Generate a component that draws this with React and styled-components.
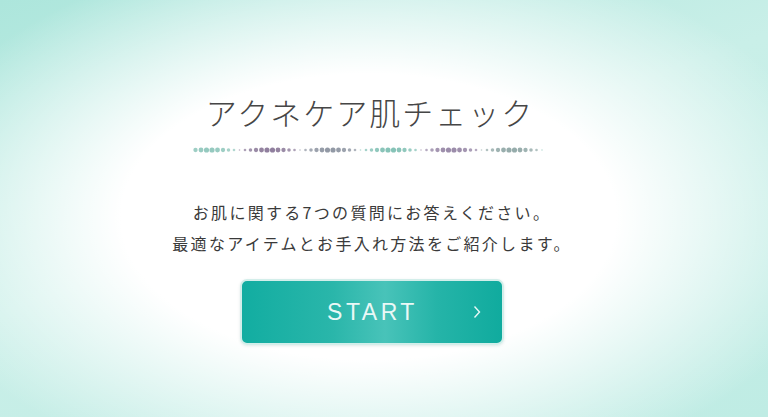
import React from 'react';
import styled, { createGlobalStyle } from 'styled-components';

const GlobalStyle = createGlobalStyle`
  html, body {
    margin: 0;
    padding: 0;
    height: 100%;
  }
  body {
    font-family: "Noto Sans CJK JP", "Noto Sans", sans-serif;
  }
`;

const Page = styled.div`
  width: 768px;
  height: 417px;
  overflow: hidden;
  box-sizing: border-box;
  padding: 92px 28px 0 0;
  display: flex;
  flex-direction: column;
  align-items: center;
  background:
    radial-gradient(ellipse 62% 66% at 48% 52%, #ffffff 0%, #ffffff 52%, rgba(255,255,255,0) 100%),
    linear-gradient(160deg, #ade6dc 0%, #c9efe8 45%, #bfece4 100%);
`;

const Title = styled.h1`
  margin: 0;
  font-size: 31px;
  line-height: 40px;
  font-weight: 300;
  letter-spacing: 2px;
  color: #464646;
`;

const DotRow = styled.svg`
  display: block;
  margin-top: 15px;
`;

const Lead = styled.p`
  margin: 44px 0 0 4px;
  font-size: 16px;
  line-height: 31px;
  letter-spacing: 2.3px;
  color: #3a3a3a;
  text-align: center;
`;

const StartButton = styled.button`
  margin: 20px 0 0 3px;
  width: 264px;
  height: 66px;
  box-sizing: border-box;
  border: 2px solid #d3eeea;
  border-radius: 7px;
  padding: 0;
  position: relative;
  display: flex;
  align-items: center;
  justify-content: center;
  cursor: pointer;
  background: linear-gradient(90deg, #12ada1 0%, #2ab6aa 35%, #48c3b9 55%, #25b4a8 75%, #10ab9e 100%);
  box-shadow: 0 1px 3px rgba(0, 80, 70, 0.12);
`;

const Label = styled.span`
  font-family: "Liberation Sans", Arial, sans-serif;
  font-size: 23px;
  letter-spacing: 3.5px;
  color: #eaf8f6;
  margin-left: 2px;
`;

const Arrow = styled.svg`
  position: absolute;
  right: 21px;
  top: 50%;
  margin-top: -7px;
`;

const palette = ['#8fc6bb', '#8a7898', '#8c93a0', '#7fbfb3', '#9585a5', '#90a7a6'];

const dots = Array.from({ length: 64 }, (_, i) => {
  const phase = ((i + 3) % 11) / 11;
  const wave = Math.sin(phase * Math.PI);
  const r = 0.8 + 1.8 * wave;
  const cluster = Math.floor((i + 3) / 11);
  return { cx: 2.5 + i * 5.5, r, fill: palette[cluster % palette.length], o: 0.6 + 0.35 * wave };
});

export default function App() {
  return (
    <>
      <GlobalStyle />
      <Page>
        <Title>アクネケア肌チェック</Title>
        <DotRow width="354" height="6" viewBox="0 0 354 6">
          {dots.map((d, i) => (
            <circle key={i} cx={d.cx} cy={3} r={d.r} fill={d.fill} opacity={d.o} />
          ))}
        </DotRow>
        <Lead>
          お肌に関する7つの質問にお答えください。
          <br />
          最適なアイテムとお手入れ方法をご紹介します。
        </Lead>
        <StartButton>
          <Label>START</Label>
          <Arrow width="8" height="14" viewBox="0 0 8 14">
            <polyline points="1.5,1.5 6.5,7 1.5,12.5" fill="none" stroke="#e8f8f6" strokeWidth="1.4" />
          </Arrow>
        </StartButton>
      </Page>
    </>
  );
}
